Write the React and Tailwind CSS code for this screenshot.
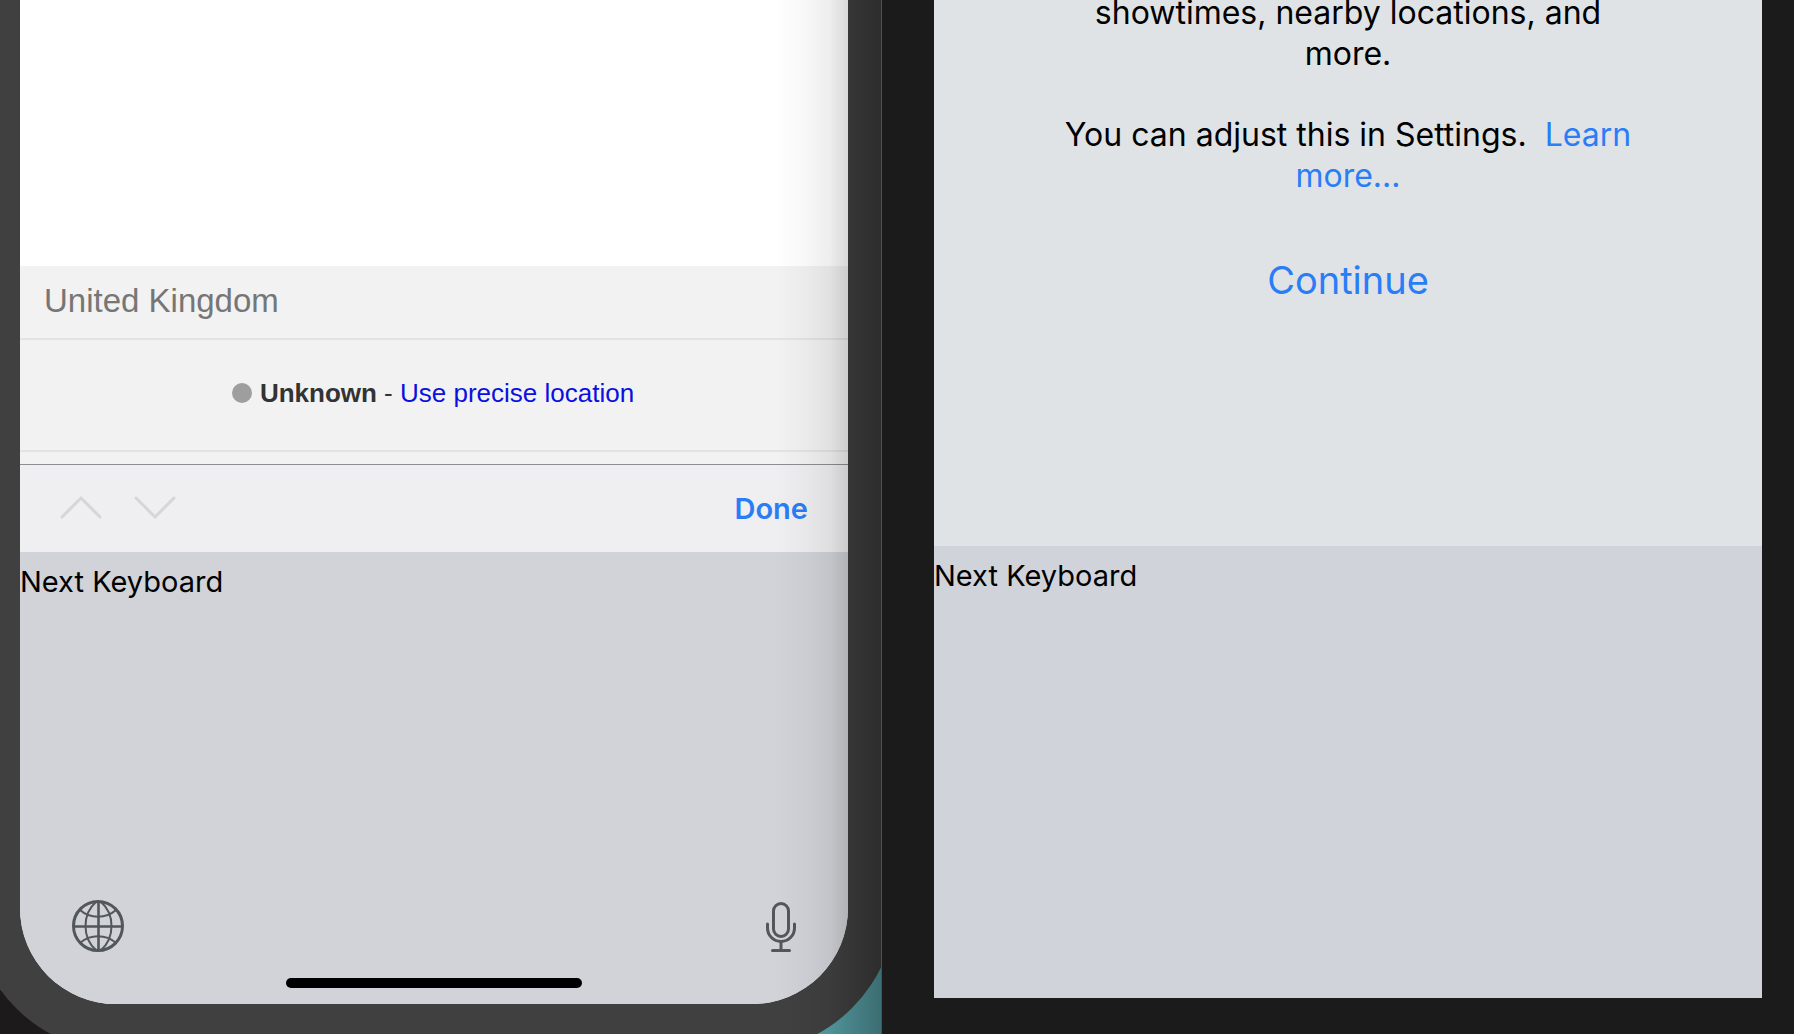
function ChevronUp(){
    return (
        <svg className="w-[42px] h-6" viewBox="0 0 42 24" fill="none" stroke="#d6d6d7" strokeWidth="3" strokeLinecap="round">
            <path d="M2 22 21 3 40 22"></path>
        </svg>
    )
}

function ChevronDown(){
    return (
        <svg className="w-[42px] h-6" viewBox="0 0 42 24" fill="none" stroke="#d6d6d7" strokeWidth="3" strokeLinecap="round">
            <path d="M2 3 21 22 40 3"></path>
        </svg>
    )
}

function Globe(){
    return (
        <svg className="w-[52px] h-[52px]" viewBox="0 0 52 52" fill="none" stroke="#52575c">
            <circle cx="26" cy="26" r="24.5" strokeWidth="3"></circle>
            <path d="M26.5 1v50M1 26.5h50" strokeWidth="2.6"></path>
            <path d="M24 2C10 14 10 38 24 50M29 2C43 14 43 38 29 50" strokeWidth="2"></path>
            <path d="M8 10C18 19 34 19 44 10M8 43C18 34 34 34 44 43" strokeWidth="2"></path>
        </svg>
    )
}

function Mic(){
    return (
        <svg className="w-[30px] h-[50px]" viewBox="0 0 30 50" fill="none" stroke="#52575c" strokeLinecap="round">
            <rect x="7.5" y="1.5" width="15" height="33" rx="7.5" strokeWidth="3"></rect>
            <path d="M1.5 22V26A13.5 13.5 0 0 0 28.5 26V22" strokeWidth="3"></path>
            <path d="M15 40.5V48M6.5 48.5H23.5" strokeWidth="3"></path>
        </svg>
    )
}

function NextKeyboard(){
    return (
        <button className="block text-[29px] leading-9 text-black">Next Keyboard</button>
    )
}

function SearchScreen(){
    return (
        <div className="flex-1 flex flex-col overflow-hidden rounded-b-[96px] bg-[#f2f2f2]">
            <div className="flex-1 bg-white"></div>
            <div className="h-[74px] shrink-0 flex items-center px-6 pb-0.5 border-b-2 border-[#e3e3e3] text-[#767676] text-[33px] font-[Liberation_Sans,sans-serif]">
                United Kingdom
            </div>
            <div className="h-28 shrink-0 flex items-center justify-center pb-1 pr-0.5 border-b-2 border-[#e3e3e3] text-[26px] text-[#333333] font-[Liberation_Sans,sans-serif]">
                <span className="w-5 h-5 mr-2 rounded-full bg-[#9e9e9e]"></span>
                <p>
                    <strong>Unknown</strong> - <a href="#" className="text-[#0b10e0]">Use precise location</a>
                </p>
            </div>
            <div className="h-[100px] shrink-0 flex flex-col pt-3">
                <div className="flex-1 flex items-center gap-8 px-10 border-t border-[#8e8d93] bg-[#efeff1]">
                    <button aria-label="Previous" className="pb-1"><ChevronUp></ChevronUp></button>
                    <button aria-label="Next" className="pb-1"><ChevronDown></ChevronDown></button>
                    <button className="ml-auto text-[29px] font-semibold text-[#2a7df7]">Done</button>
                </div>
            </div>
            <div className="h-[452px] shrink-0 flex flex-col pt-3 bg-[#d1d3d8]">
                <div><NextKeyboard></NextKeyboard></div>
                <div className="mt-auto flex items-end justify-between px-[52px]">
                    <button aria-label="Change keyboard"><Globe></Globe></button>
                    <button aria-label="Dictate"><Mic></Mic></button>
                </div>
                <div className="w-[296px] h-[10px] mt-[26px] mb-4 mx-auto rounded-full bg-black"></div>
            </div>
        </div>
    )
}

function SimulatorPane(){
    return (
        <section className="relative overflow-hidden flex flex-col border-r border-[#505050] bg-[linear-gradient(90deg,#1d1a1c_50%,#559da4_50%)]">
            <div className="flex-1 flex flex-col -ml-7 -mr-[15px] -mb-[18px] px-12 pb-12 rounded-b-[150px] bg-[#404040]">
                <SearchScreen></SearchScreen>
            </div>
            {/* shadow of the window on the right */}
            <div className="absolute inset-y-0 right-0 w-[106px] pointer-events-none bg-[linear-gradient(90deg,transparent,rgba(0,0,0,0.03)_30%,rgba(0,0,0,0.07)_52%,rgba(0,0,0,0.16)_70%,rgba(0,0,0,0.3))]"></div>
        </section>
    )
}

function LocationPane(){
    return (
        <section className="flex flex-col pl-[52px] pr-8 pb-9 bg-[#1b1b1b]">
            <div className="flex-1 flex flex-col items-center overflow-hidden bg-[#dfe3e6]">
                <div className="w-[600px] -mt-2 flex flex-col gap-10 text-center text-[32px] leading-[41px] text-black">
                    <p className="px-10">showtimes, nearby locations, and more.</p>
                    <p>You can adjust this in Settings.&nbsp; <a href="#" className="text-[#2a7df7]">Learn more...</a></p>
                </div>
                <button className="mt-15 text-[38px] leading-[48px] text-[#2a7df7]">Continue</button>
            </div>
            <div className="h-[452px] shrink-0 pt-3 bg-[#d0d3d9]">
                <NextKeyboard></NextKeyboard>
            </div>
        </section>
    )
}

export default function App(){
    return (
        <main className="h-screen grid grid-cols-[882fr_912fr] overflow-hidden font-[Inter,sans-serif]">
            <SimulatorPane></SimulatorPane>
            <LocationPane></LocationPane>
        </main>
    )
}
